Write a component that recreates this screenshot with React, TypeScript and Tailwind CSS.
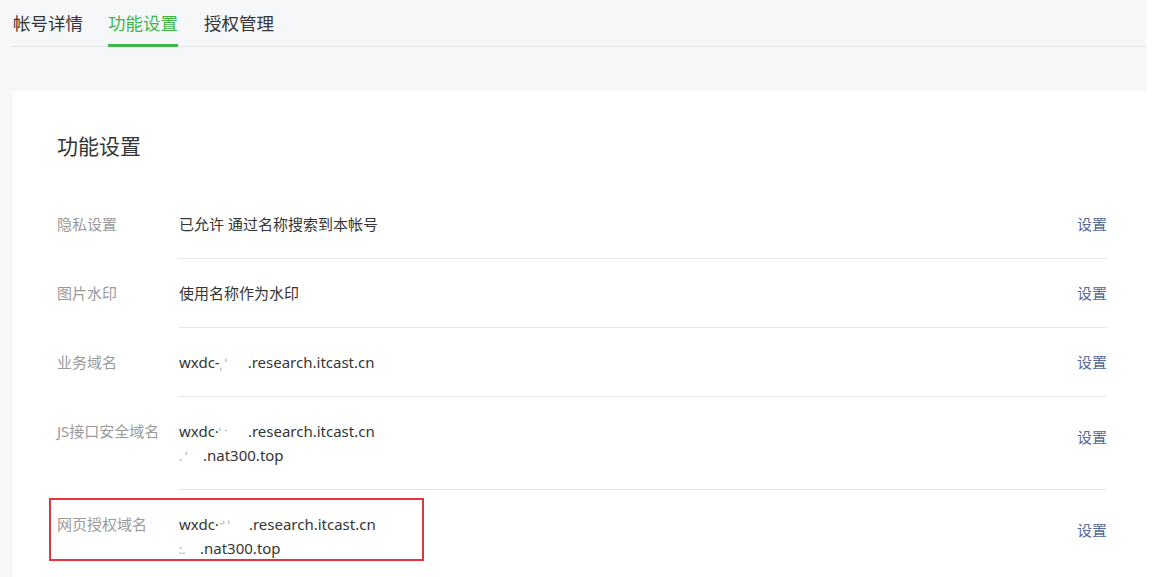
import React from 'react'

type Row = {
  label: string
  lines: React.ReactNode[]
  boxed?: boolean
}

const Blur = ({ w, marks }: { w: string; marks: string }) => (
  <span className={`inline-block ${w} text-[12px] leading-[20px] text-[#a8a8a8] align-baseline`}>{marks}</span>
)

const rows: Row[] = [
  { label: '隐私设置', lines: ['已允许 通过名称搜索到本帐号'] },
  { label: '图片水印', lines: ['使用名称作为水印'] },
  {
    label: '业务域名',
    lines: [
      <>
        wxdc-<Blur w="w-[28px]" marks="ˌ ˈ" />.research.itcast.cn
      </>,
    ],
  },
  {
    label: 'JS接口安全域名',
    lines: [
      <>
        wxdc·<Blur w="w-[29px]" marks="  ˈ ˑ" />.research.itcast.cn
      </>,
      <>
        <Blur w="w-[24px]" marks=". ˈ" />.nat300.top
      </>,
    ],
  },
  {
    label: '网页授权域名',
    lines: [
      <>
        wxdc·<Blur w="w-[30px]" marks=" ˑˈ ˈ" />.research.itcast.cn
      </>,
      <>
        <Blur w="w-[21px]" marks=":." />.nat300.top
      </>,
    ],
    boxed: true,
  },
]

const tabs = ['帐号详情', '功能设置', '授权管理']

export default function App() {
  return (
    <div
      className="w-[1146px] min-h-[577px] bg-[#f6f7f9] text-[#353535]"
      style={{ fontFamily: '"Noto Sans", "Noto Sans CJK SC", sans-serif' }}
    >
      <div className="pl-[12px]">
        <div className="flex h-[47px] border-b border-[#e4e6e9]">
          {tabs.map((t, i) => (
            <div
              key={t}
              className={
                i === 1
                  ? 'mr-[25px] -mb-[1px] flex h-[47px] items-center border-b-[3px] border-[#44b549] pt-[3px] text-[17.5px] text-[#44b549]'
                  : 'mr-[25px] flex h-[47px] items-center pl-[1px] text-[17.5px] text-[#353535]'
              }
            >
              {t}
            </div>
          ))}
        </div>
      </div>

      <div className="ml-[13px] mt-[44px] bg-white pl-[44px] pr-[39px] pt-[40px]">
        <h2 className="text-[21px] leading-[30px] font-normal text-[#353535]">功能设置</h2>
        <div className="mt-[29px]">
          {rows.map((r, i) => (
            <div key={r.label} className="relative flex">
              <div className="w-[121px] shrink-0 py-[22px] text-[15px] leading-[24px] text-[#9a9a9a]">
                {r.label}
              </div>
              <div
                className={
                  i === rows.length - 1
                    ? 'flex flex-1 items-center py-[22px]'
                    : 'flex flex-1 items-center border-b border-[#e7e7eb] py-[22px]'
                }
              >
                <div className="flex-1 pl-[1px] text-[15px] leading-[24px] text-[#353535]">
                  {r.lines.map((l, j) => (
                    <div key={j} className="h-[24px] overflow-hidden">
                      {l}
                    </div>
                  ))}
                </div>
                <a
                  className={
                    r.lines.length > 1
                      ? 'mb-[12px] text-[15px] leading-[24px] text-[#576b95]'
                      : 'text-[15px] leading-[24px] text-[#576b95]'
                  }
                >
                  设置
                </a>
              </div>
              {r.boxed && (
                <div className="pointer-events-none absolute left-[-8px] top-[8px] h-[63px] w-[375px] border-2 border-[#e8323c]" />
              )}
            </div>
          ))}
        </div>
      </div>
    </div>
  )
}
